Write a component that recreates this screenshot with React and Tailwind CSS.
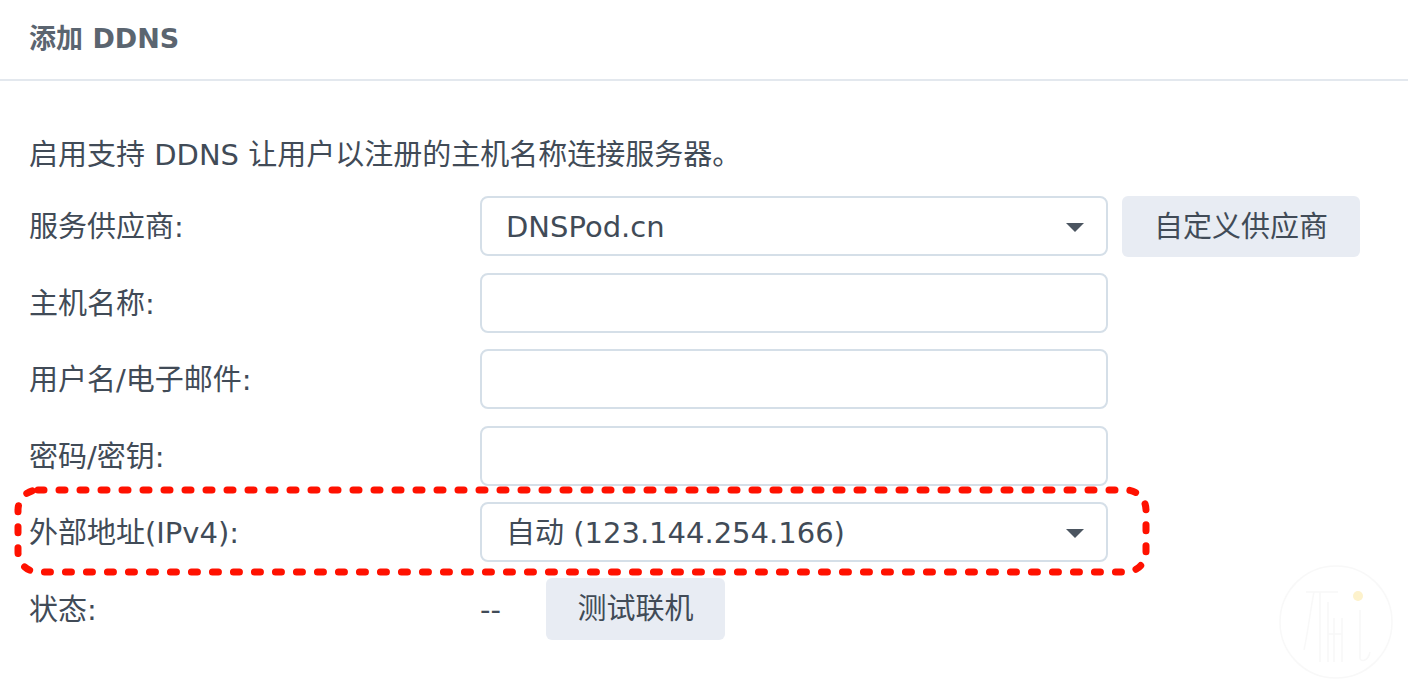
import React from 'react';

const font = { fontFamily: '"DejaVu Sans", "Noto Sans CJK SC", sans-serif' };

function Caret() {
    return (
        <svg width="18" height="9" viewBox="0 0 18 9" className="shrink-0">
            <path d="M0 0 H18 L9 9 Z" fill="#4b5560" />
        </svg>
    );
}

function TextInput() {
    return <div className="w-[628px] h-full rounded-[8px] border-2 border-[#d5dfe8] bg-white" />;
}

function Select({ value }) {
    return (
        <div className="w-[628px] h-full rounded-[8px] border-2 border-[#d5dfe8] bg-white flex items-center pl-[24px] pr-[22px] pt-[3px]">
            <span className="flex-1">{value}</span>
            <Caret />
        </div>
    );
}

function Row({ label, children }) {
    return (
        <div className="flex items-center h-[60px]">
            <div className="w-[451px] shrink-0 pt-[4px]">{label}</div>
            {children}
        </div>
    );
}

function Watermark() {
    return (
        <svg width="120" height="120" viewBox="0 0 120 120" className="absolute right-[12px] bottom-[12px]">
            <circle cx="60" cy="60" r="56" fill="none" stroke="#f8f8f8" strokeWidth="1.5" />
            <path d="M30 30 H62 M38 30 C34 50 32 70 28 88 M44 30 V100 M52 40 V100 M58 56 V100 M52 72 H66 M66 56 V100 M84 48 V96 C84 100 92 100 94 90"
                fill="none" stroke="#f8f8f8" strokeWidth="1.5" />
            <circle cx="82" cy="34" r="5" fill="#fdf2cc" />
        </svg>
    );
}

export default function App() {
    return (
        <div className="relative w-[1408px] h-[694px] bg-white text-[#414b57] text-[29px] overflow-hidden" style={font}>
            <header className="h-[81px] border-b-2 border-[#e3e8ee] pl-[29px] flex items-center pb-[2px]">
                <h1 className="text-[27px] font-bold text-[#5b6570] leading-none">添加 DDNS</h1>
            </header>

            <main className="pl-[29px] pt-[55px]">
                <p className="leading-[38px]">启用支持 DDNS 让用户以注册的主机名称连接服务器。</p>

                <div className="mt-[22px] flex flex-col gap-[16.5px]">
                    <Row label="服务供应商:">
                        <Select value="DNSPod.cn" />
                        <button className="ml-[14px] w-[238px] h-[61px] rounded-[6px] bg-[#e8ecf3] text-[#414b57] pt-[3px]">自定义供应商</button>
                    </Row>
                    <Row label="主机名称:">
                        <TextInput />
                    </Row>
                    <Row label="用户名/电子邮件:">
                        <TextInput />
                    </Row>
                    <Row label="密码/密钥:">
                        <TextInput />
                    </Row>
                    <div className="relative">
                        <Row label="外部地址(IPv4):">
                            <Select value="自动 (123.144.254.166)" />
                        </Row>
                        <svg width="1140" height="92" className="absolute left-[-15px] top-[-16px] pointer-events-none">
                            <rect x="4" y="4" width="1128" height="82" rx="20" fill="none"
                                stroke="#ff1100" strokeWidth="7" strokeDasharray="6 15" strokeLinecap="round" />
                        </svg>
                    </div>
                    <div className="flex items-center h-[62px] -mt-[1px]">
                        <div className="w-[451px] shrink-0 pt-[4px]">状态:</div>
                        <span className="w-[66px] pt-[4px]">--</span>
                        <button className="w-[179px] h-[62px] rounded-[6px] bg-[#e8ecf3] text-[#414b57] pt-[3px]">测试联机</button>
                    </div>
                </div>
            </main>

            <Watermark />
        </div>
    );
}
